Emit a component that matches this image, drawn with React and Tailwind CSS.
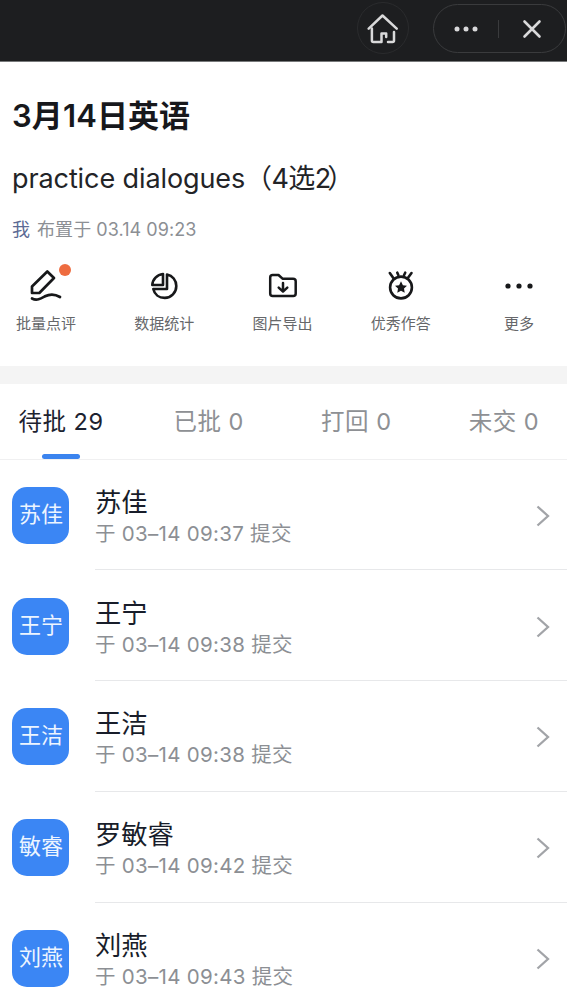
import React from "react"

const tools = [
  { label: "批量点评", icon: <PenIcon />, dot: true },
  { label: "数据统计", icon: <PieIcon /> },
  { label: "图片导出", icon: <FolderIcon /> },
  { label: "优秀作答", icon: <MedalIcon /> },
  { label: "更多", icon: <MoreIcon /> },
]

const tabs = [
  { label: "待批", count: 29, active: true },
  { label: "已批", count: 0 },
  { label: "打回", count: 0 },
  { label: "未交", count: 0 },
]

const students = [
  { name: "苏佳", short: "苏佳", time: "09:37" },
  { name: "王宁", short: "王宁", time: "09:38" },
  { name: "王洁", short: "王洁", time: "09:38" },
  { name: "罗敏睿", short: "敏睿", time: "09:42" },
  { name: "刘燕", short: "刘燕", time: "09:43" },
]

function PenIcon() {
  return (
    <svg width="34" height="34" viewBox="0 0 34 34" fill="none" stroke="#17181a" strokeWidth="2.7" strokeLinejoin="round" strokeLinecap="round">
      <path d="M3 24V17.5L18.3 2.5L25 9L10.3 24Z" />
      <path d="M3 29.5C8 32 12 29.500 16 27.300C20.500 25 25.500 24.700 31 28" />
    </svg>
  )
}

function PieIcon() {
  return (
    <svg width="34" height="34" viewBox="0 0 34 34" fill="none" stroke="#17181a" strokeWidth="2.6" strokeLinejoin="round" strokeLinecap="round">
      <path d="M16 5V16H5.300C5.600 10.300 10 5.600 16 5Z" />
      <path d="M20 5.500C25.500 6.600 29.300 11.300 29.300 17C29.300 23.600 24.200 28.900 17.800 28.900C12 28.900 7.500 25.500 6.300 20H20Z" />
    </svg>
  )
}

function FolderIcon() {
  return (
    <svg width="34" height="34" viewBox="0 0 34 34" fill="none" stroke="#17181a" strokeWidth="2.5" strokeLinejoin="round" strokeLinecap="round">
      <path d="M4.200 8.500C4.200 7 5.200 6 6.700 6H12.500L16.500 9.700H27C28.700 9.700 29.700 10.700 29.700 12.200V24.500C29.700 26 28.700 27 27.200 27H6.700C5.200 27 4.200 26 4.200 24.500Z" />
      <path d="M17 14V22.500M12.700 18.700L17 22.700L21.300 18.700" />
    </svg>
  )
}

function MedalIcon() {
  return (
    <svg width="34" height="34" viewBox="0 0 34 34" fill="none" stroke="#17181a" strokeWidth="2.6" strokeLinecap="round">
      <circle cx="17" cy="18.500" r="10.900" />
      <path d="M5.800 4L9.300 9M13.300 3.700L14.300 6M21.200 3.700L20 6.200M27.500 4L24.200 8.500" />
      <path d="M17 12.300L18.900 16.200L23 16.700L20 19.600L20.700 23.800L17 21.800L13.300 23.800L14 19.600L11 16.700L15.100 16.200Z" fill="#17181a" stroke="none" />
    </svg>
  )
}

function MoreIcon() {
  return (
    <svg width="34" height="34" viewBox="0 0 34 34" fill="#17181a">
      <circle cx="6" cy="17" r="2.600" />
      <circle cx="17" cy="17" r="2.600" />
      <circle cx="28" cy="17" r="2.600" />
    </svg>
  )
}

function TopBar() {
  return (
    <header className="flex h-[62px] items-start justify-end border-b border-[#77797a] bg-[#1d1e20]">
      <div className="mt-[2px] mr-6 flex size-[52px] items-center justify-center rounded-full border border-[#2a2b2d]">
        <svg width="32" height="32" viewBox="0 0 32 32" fill="none" stroke="#d9d9da" strokeWidth="2.5" strokeLinejoin="round" strokeLinecap="round">
          <path d="M1.700 16.700L15.500 3.500L29.700 16.700" />
          <path d="M4.900 16.500V28.500Q4.900 30 6.400 30H14.500V21.500H19.200V25" />
          <path d="M27 20V28.500Q27 30 25.500 30H21" />
        </svg>
      </div>
      <div className="mt-1 mr-px flex h-[49px] w-[133px] items-center rounded-full border border-[#3a3b3d]">
        <div className="flex w-[64px] justify-center">
          <svg width="24" height="8" viewBox="0 0 24 8" fill="#d9d9da">
            <circle cx="3" cy="4" r="2.500" />
            <circle cx="12" cy="4" r="2.500" />
            <circle cx="21" cy="4" r="2.500" />
          </svg>
        </div>
        <div className="h-[18px] w-px bg-[#3a3b3d]" />
        <div className="flex flex-1 justify-center">
          <svg width="20" height="20" viewBox="0 0 20 20" stroke="#d9d9da" strokeWidth="2.600" strokeLinecap="round">
            <path d="M2.500 2.500L17.500 17.500M17.500 2.500L2.500 17.500" />
          </svg>
        </div>
      </div>
    </header>
  )
}

function Homework() {
  return (
    <section className="h-[304px] px-3 pt-[34px]">
      <h1 className="h-10 text-[31px] leading-10 font-semibold tracking-[0.1px] whitespace-nowrap text-[#17181c]">3月14日英语</h1>
      <p className="mt-[25px] flex h-9 text-[27px] leading-9 whitespace-nowrap text-[#232427]">
        <span className="tracking-[-0.1px]">practice dialogues</span>
        <span className="tracking-[-0.6px]">（4选<span className="tracking-[-4px]">2</span>）</span>
      </p>
      <p className="mt-[21px] h-6 text-[18px] leading-6 tracking-[0.05px] whitespace-nowrap text-[#8c8f94]">
        <span className="mr-[7px] text-[#5b6a94]">我</span>布置于 03.14 09:23
      </p>
      <div className="-mx-3 mt-[27px] flex justify-between pr-[2px]">
        {tools.map((tool) => (
          <button key={tool.label} className="relative flex w-[92px] flex-col items-center">
            {tool.icon}
            {tool.dot && <span className="absolute top-[-5px] left-[59px] size-3 rounded-full bg-[#ee6c40]" />}
            <span className="mt-[11px] h-5 text-[15px] leading-5 text-[#66676a]">{tool.label}</span>
          </button>
        ))}
      </div>
    </section>
  )
}

function Tabs() {
  return (
    <nav className="flex h-[76px] justify-between border-b border-[#f0f0f1] pr-[19px] pl-[17px]">
      {tabs.map((tab) => (
        <button
          key={tab.label}
          className={
            "relative flex h-[74px] w-[88px] items-center justify-center pt-[2px] text-[23.5px] tracking-[0.5px] whitespace-pre " +
            (tab.active ? "text-[#1c2230]" : "text-[#8e9094]")
          }
        >
          {tab.label} {tab.count}
          {tab.active && <span className="absolute bottom-[-1px] left-[25px] h-[5px] w-[38px] rounded-sm bg-[#3b84ef]" />}
        </button>
      ))}
    </nav>
  )
}

function StudentRow({ student }) {
  return (
    <li className="flex h-[110.8px] pl-[12.4px]">
      <div className="mt-[27.4px] flex size-[57px] shrink-0 items-center justify-center rounded-[15px] bg-[#3b86f4] pb-[3px] text-[22px] leading-none text-[#edf5ff]">
        {student.short}
      </div>
      <div className="ml-[25.6px] flex flex-1 justify-between border-b border-[#e7e8ea] pr-[17px]">
        <div className="pt-[25.4px] whitespace-nowrap">
          <p className="h-[35px] text-[26.3px] leading-9 text-[#181d2a]">{student.name}</p>
          <p className="h-7 text-[20.5px] leading-7 tracking-[0.29px] text-[#8c8f94]">
            于 03–14 {student.time} 提交
          </p>
        </div>
        <svg className="mt-[45.4px]" width="14" height="22" viewBox="0 0 14 22" fill="none" stroke="#a2a4a8" strokeWidth="2.300">
          <path d="M1.500 1.500L12 11L1.500 20.500" />
        </svg>
      </div>
    </li>
  )
}

export default function App() {
  return (
    <div className="h-[1008px] w-[567px] overflow-hidden bg-white font-[Inter,'Noto_Sans_CJK_SC',sans-serif]">
      <TopBar />
      <Homework />
      <div className="h-[18px] bg-[#f4f4f4]" />
      <Tabs />
      <ul className="-mt-[0.6px]">
        {students.map((student) => (
          <StudentRow key={student.name} student={student} />
        ))}
      </ul>
    </div>
  )
}
